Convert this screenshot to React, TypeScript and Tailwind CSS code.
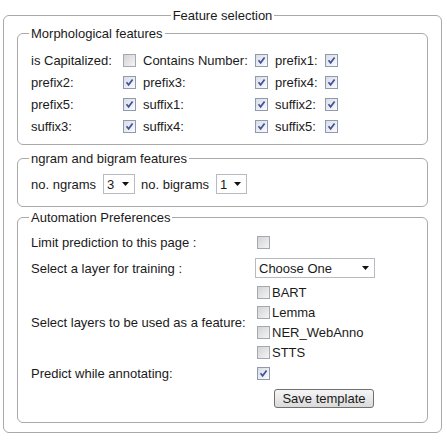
import React from "react";

function Box({ checked }: { checked?: boolean }) {
  if (!checked) {
    return (
      <span className="inline-block h-[13px] w-[13px] border border-[#a4a8b0] bg-linear-to-br from-[#d4d4d4] to-[#f4f4f4]" />
    );
  }
  return (
    <span className="inline-flex h-[13px] w-[13px] items-center justify-center border border-[#8d9ab0] bg-linear-to-br from-[#dadde4] to-[#fbfbfb]">
      <svg width="9" height="9" viewBox="0 0 9 9">
        <path d="M1.5 4.3 L3.6 6.8 L7.6 1.4" stroke="#3f52a0" strokeWidth="1.7" fill="none" />
      </svg>
    </span>
  );
}

function Select({ value, className }: { value: string; className: string }) {
  return (
    <div className={"flex h-[20px] items-center justify-between border border-[#b7bac1] bg-white pl-[3px] pr-[5px] " + className}>
      <span>{value}</span>
      <svg width="7" height="4" viewBox="0 0 7 4">
        <path d="M0 0 H7 L3.5 4 Z" fill="#111" />
      </svg>
    </div>
  );
}

const morph: [string, boolean][][] = [
  [["is Capitalized:", false], ["Contains Number:", true], ["prefix1:", true]],
  [["prefix2:", true], ["prefix3:", true], ["prefix4:", true]],
  [["prefix5:", true], ["suffix1:", true], ["suffix2:", true]],
  [["suffix3:", true], ["suffix4:", true], ["suffix5:", true]],
];

const layers = ["BART", "Lemma", "NER_WebAnno", "STTS"];

export default function App() {
  return (
    <div className="h-[442px] w-[447px] bg-white text-[13px] leading-[15px] text-[#1a1a1a]" style={{ fontFamily: '"Liberation Sans", Arial, sans-serif' }}>
      <fieldset className="ml-[3px] mt-[8px] w-[439px] rounded-[6px] border border-[#a9a9a9] px-[13px] pb-[9px] pt-[3px]">
        <legend className="mx-auto px-[2px]">Feature selection</legend>

        <fieldset className="rounded-[6px] border border-[#a9a9a9] pb-[7px] pl-[13px] pt-[8px]">
          <legend className="-ml-[2px] px-[2px]">Morphological features</legend>
          <div className="grid grid-cols-[92px_20px_112px_20px_50px_20px]">
            {morph.map((row, i) =>
              row.map(([label, checked], j) => (
                <React.Fragment key={i + "-" + j}>
                  <div className="flex h-[22px] items-center">{label}</div>
                  <div className="flex h-[22px] items-center">
                    <Box checked={checked} />
                  </div>
                </React.Fragment>
              ))
            )}
          </div>
        </fieldset>

        <fieldset className="mt-[6px] rounded-[6px] border border-[#a9a9a9] pb-[12px] pl-[13px] pt-[8px]">
          <legend className="-ml-[2px] px-[2px]">ngram and bigram features</legend>
          <div className="flex items-center">
            <span>no. ngrams</span>
            <Select value="3" className="ml-[7px] w-[32px]" />
            <span className="ml-[6px]">no. bigrams</span>
            <Select value="1" className="ml-[7px] w-[31px]" />
          </div>
        </fieldset>

        <fieldset className="mt-[3px] rounded-[6px] border border-[#a9a9a9] pb-[14px] pl-[13px] pt-[7px]">
          <legend className="-ml-[2px] px-[2px]">Automation Preferences</legend>
          <div className="grid grid-cols-[224px_auto] items-center">
            <div className="flex h-[20px] items-center">Limit prediction to this page :</div>
            <div className="flex h-[20px] items-center pl-[2px]">
              <Box />
            </div>

            <div className="mt-[6px] flex h-[20px] items-center">Select a layer for training :</div>
            <Select value="Choose One" className="mt-[6px] w-[120px]" />

            <div className="mt-[4px] flex items-center">Select layers to be used as a feature:</div>
            <div className="mt-[4px] flex flex-col pl-[2px]">
              {layers.map((l) => (
                <div key={l} className="flex h-[20px] items-center gap-[2px]">
                  <Box />
                  <span>{l}</span>
                </div>
              ))}
            </div>

            <div className="mt-[1px] flex h-[20px] items-center">Predict while annotating:</div>
            <div className="mt-[1px] flex h-[20px] items-center pl-[2px]">
              <Box checked />
            </div>

            <div />
            <div className="mt-[6px] pl-[19px]">
              <button className="h-[19px] w-[100px] rounded-[3px] border border-[#707070] bg-linear-to-b from-[#f6f6f6] to-[#dadada] leading-[17px]">
                Save template
              </button>
            </div>
          </div>
        </fieldset>
      </fieldset>
    </div>
  );
}
